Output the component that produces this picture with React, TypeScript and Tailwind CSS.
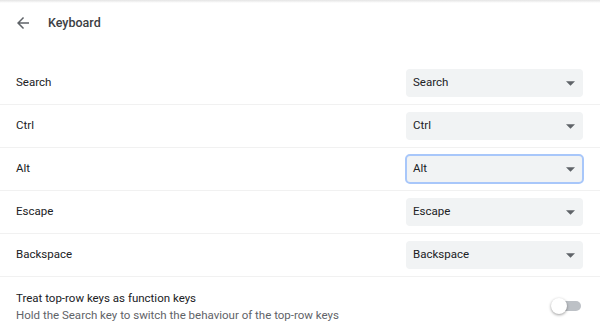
import React from 'react';

const rows = [
  { label: 'Search', value: 'Search', focused: false },
  { label: 'Ctrl', value: 'Ctrl', focused: false },
  { label: 'Alt', value: 'Alt', focused: true },
  { label: 'Escape', value: 'Escape', focused: false },
  { label: 'Backspace', value: 'Backspace', focused: false },
];

function Select({ value, focused }: { value: string; focused: boolean }) {
  return (
    <div
      className={
        'w-[177px] h-[28px] rounded-[4px] bg-[#f1f3f4] flex items-center justify-between pl-[7px] pr-[8px] ' +
        (focused ? 'outline outline-2 outline-[#a8c7fa] -outline-offset-1' : '')
      }
    >
      <span className="text-[11.5px] text-[#202124]">{value}</span>
      <svg width="9" height="5" viewBox="0 0 10 5">
        <path d="M0 0 L10 0 L5 5 Z" fill="#5f6368" />
      </svg>
    </div>
  );
}

export default function App() {
  return (
    <div className="w-[600px] h-[333px] bg-white overflow-hidden font-['Roboto',sans-serif]">
      {/* top edge shadow */}
      <div className="h-[3px] bg-gradient-to-b from-[#e4e4e4] to-white" />

      {/* header */}
      <div className="h-[40px] flex items-center">
        <svg width="18" height="18" viewBox="0 0 24 24" className="ml-[14px]">
          <path d="M20 11H7.83l5.59-5.59L12 4l-8 8 8 8 1.41-1.41L7.83 13H20v-2z" fill="#5f6368" />
        </svg>
        <span className="ml-[16px] text-[12.5px] font-medium text-[#3c4043]">Keyboard</span>
      </div>
      <div className="h-[19px]" />

      {/* key remap rows */}
      {rows.map((r) => (
        <div key={r.label} className="h-[43px] flex items-center justify-between pl-[16px] pr-[17px] border-b border-[#f1f1f1]">
          <span className="text-[11.5px] text-[#202124]">{r.label}</span>
          <Select value={r.value} focused={r.focused} />
        </div>
      ))}

      {/* toggle row */}
      <div className="h-[58px] flex items-center justify-between pl-[16px] pr-[19px]">
        <div className="flex flex-col leading-[17px] pt-[1px]">
          <span className="text-[11.5px] text-[#202124]">Treat top-row keys as function keys</span>
          <span className="text-[11.5px] text-[#5f6368]">Hold the Search key to switch the behaviour of the top-row keys</span>
        </div>
        <div className="relative w-[26px] h-[16px] flex items-center">
          <div className="w-[26px] h-[10px] rounded-full bg-[#bdc1c6]" />
          <div className="absolute left-[-4px] top-0 w-[16px] h-[16px] rounded-full bg-white shadow-[0_1px_3px_rgba(0,0,0,0.4)]" />
        </div>
      </div>
    </div>
  );
}
